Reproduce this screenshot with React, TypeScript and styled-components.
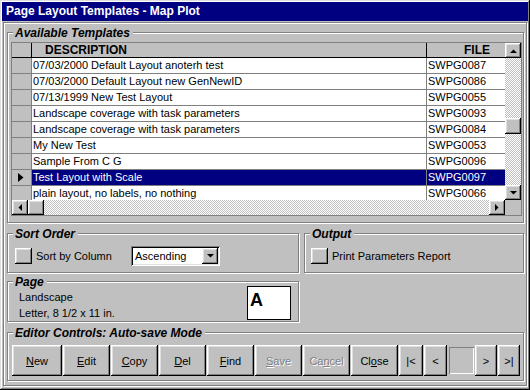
import React from "react";
import styled, { createGlobalStyle, css } from "styled-components";

const GlobalStyle = createGlobalStyle`
  html, body {
    margin: 0;
    padding: 0;
    background: #c0c0c0;
  }
  * {
    box-sizing: border-box;
  }
`;

const raised = css`
  background: #c0c0c0;
  box-shadow: inset -1px -1px #000, inset 1px 1px #fff,
    inset -2px -2px #808080, inset 2px 2px #dfdfdf;
`;

const etched = css`
  border: 1px solid #808080;
  box-shadow: inset 1px 1px #fff, 1px 1px #fff;
`;

const checker = css`
  background: repeating-conic-gradient(#fff 0 25%, #c0c0c0 0 50%) 0 0 / 2px
    2px;
`;

const Window = styled.div`
  width: 530px;
  height: 390px;
  padding: 2px;
  display: flex;
  flex-direction: column;
  background: #c0c0c0;
  box-shadow: inset -1px -1px #000, inset 1px 1px #dfdfdf,
    inset -2px -2px #808080, inset 2px 2px #fff;
  font-family: "Liberation Sans", Arial, sans-serif;
  font-size: 11px;
  color: #000;
`;

const TitleBar = styled.div`
  height: 19px;
  padding-left: 4px;
  background: #000080;
  color: #fff;
  font-weight: bold;
  font-size: 12px;
  line-height: 19px;
  white-space: nowrap;
`;

const Panel = styled.div`
  flex: 1;
  margin: 1px 1px 2px 1px;
  padding: 9px 2px 0 3px;
  display: flex;
  flex-direction: column;
  gap: 10px;
  ${etched};
`;

const Group = styled.div<{ $h: number }>`
  position: relative;
  height: ${(p) => p.$h}px;
  ${etched};
`;

const Legend = styled.span`
  position: absolute;
  top: -7px;
  left: 5px;
  padding: 0 3px 0 2px;
  background: #c0c0c0;
  font-weight: bold;
  font-style: italic;
  font-size: 12px;
  line-height: 14px;
  white-space: nowrap;
`;

/* ---------- templates grid ---------- */

const TemplatesBody = styled.div`
  height: 100%;
  padding: 9px 1px 6px 3px;
`;

const Grid = styled.div`
  height: 100%;
  border: 1px solid #808080;
  display: flex;
  background: #fff;
`;

const TableSide = styled.div`
  width: 493px;
  display: flex;
  flex-direction: column;
`;

const HeaderRow = styled.div`
  height: 15px;
  display: flex;
  background: #c0c0c0;
  border-bottom: 1px solid #000;
  font-weight: bold;
  font-size: 12px;
  line-height: 14px;
`;

const HeadCell = styled.div<{ $w?: number; $align?: string; $pad?: string }>`
  ${(p) => (p.$w ? `width: ${p.$w}px;` : "flex: 1;")}
  text-align: ${(p) => p.$align || "left"};
  padding: ${(p) => p.$pad || "0"};
  border-right: ${(p) => (p.$w ? "1px solid #000" : "none")};
`;

const Rows = styled.div`
  height: 142px;
  overflow: hidden;
`;

const Row = styled.div<{ $sel?: boolean }>`
  height: 16px;
  display: flex;
  border-bottom: 1px solid #808080;
  line-height: 15px;
  background: ${(p) => (p.$sel ? "#000080" : "#fff")};
  color: ${(p) => (p.$sel ? "#fff" : "#000")};
`;

const Selector = styled.div`
  width: 20px;
  background: #c0c0c0;
  border-right: 1px solid #808080;
  display: flex;
  align-items: center;
  padding-left: 6px;
`;

const Cell = styled.div<{ $w?: number }>`
  ${(p) => (p.$w ? `width: ${p.$w}px;` : "flex: 1;")}
  padding-left: 1px;
  white-space: nowrap;
  overflow: hidden;
  border-right: ${(p) => (p.$w ? "1px solid #808080" : "none")};
`;

const HScroll = styled.div`
  height: 15px;
  display: flex;
  ${checker};
`;

const VScroll = styled.div`
  width: 16px;
  display: flex;
  flex-direction: column;
`;

const Track = styled.div`
  flex: 1;
  ${checker};
`;

const Thumb = styled.div<{ $offset: number }>`
  width: 16px;
  height: 16px;
  margin-top: ${(p) => p.$offset}px;
  ${raised};
`;

const ScrollBtn = styled.div<{ $w: number; $h: number }>`
  width: ${(p) => p.$w}px;
  height: ${(p) => p.$h}px;
  flex-shrink: 0;
  display: flex;
  align-items: center;
  justify-content: center;
  ${raised};
`;

const Corner = styled.div`
  height: 15px;
  background: #c0c0c0;
`;

const Arrow = ({ dir }: { dir: "up" | "down" | "left" | "right" }) => {
  const pts = {
    up: "0,4 7,4 3.5,0.5",
    down: "0,0 7,0 3.5,3.5",
    left: "4,0 4,7 0.5,3.5",
    right: "0,0 0,7 3.5,3.5",
  }[dir];
  const vertical = dir === "up" || dir === "down";
  return (
    <svg width={vertical ? 7 : 4} height={vertical ? 4 : 7}>
      <polygon points={pts} fill="#000" />
    </svg>
  );
};

/* ---------- lower groups ---------- */

const Middle = styled.div`
  display: grid;
  grid-template-columns: 292px 1fr;
  column-gap: 5px;
  row-gap: 8px;
`;

const OptionRow = styled.div<{ $left: number }>`
  height: 100%;
  display: flex;
  align-items: flex-start;
  padding: 12px 0 0 ${(p) => p.$left}px;
`;

const OptionLine = styled.div`
  height: 20px;
  display: flex;
  align-items: center;
`;

const CheckBtn = styled.div`
  width: 17px;
  height: 16px;
  ${raised};
`;

const CheckText = styled.span<{ $w?: number }>`
  margin-left: 4px;
  ${(p) => (p.$w ? `width: ${p.$w}px;` : "")}
  white-space: nowrap;
`;

const Combo = styled.div`
  width: 89px;
  height: 20px;
  padding: 2px;
  display: flex;
  align-items: center;
  background: #fff;
  box-shadow: inset 1px 1px #808080, inset -1px -1px #fff, inset 2px 2px #000,
    inset -2px -2px #dfdfdf;
`;

const ComboText = styled.span`
  flex: 1;
  padding-left: 2px;
`;

const PageBody = styled.div`
  height: 100%;
  display: flex;
  padding: 0 7px 0 11px;
`;

const PageText = styled.div`
  flex: 1;
  padding-top: 7px;
  line-height: 16px;
`;

const Preview = styled.div`
  width: 44px;
  height: 34px;
  margin-top: 4px;
  border: 1px solid #000;
  background: #fff;
  padding: 3px 0 0 2px;
  font-weight: bold;
  font-size: 18px;
  line-height: 20px;
`;

const ButtonBar = styled.div`
  display: flex;
  gap: 1px;
  padding: 12px 0 0 4px;
`;

const Button = styled.div<{ $w: number; $disabled?: boolean }>`
  width: ${(p) => p.$w}px;
  height: 31px;
  display: flex;
  align-items: center;
  justify-content: center;
  ${raised};
  color: ${(p) => (p.$disabled ? "#808080" : "#000")};
  text-shadow: ${(p) => (p.$disabled ? "1px 1px #fff" : "none")};
  white-space: nowrap;
`;

const PosBox = styled.div`
  width: 25px;
  height: 27px;
  margin: 2px 0 0 1px;
  background: #c0c0c0;
  box-shadow: inset 1px 1px #808080, inset -1px -1px #fff;
`;

const templates: [string, string][] = [
  ["07/03/2000 Default Layout anoterh test", "SWPG0087"],
  ["07/03/2000 Default Layout new GenNewID", "SWPG0086"],
  ["07/13/1999 New Test Layout", "SWPG0055"],
  ["Landscape coverage with task parameters", "SWPG0093"],
  ["Landscape coverage with task parameters", "SWPG0084"],
  ["My New Test", "SWPG0053"],
  ["Sample From C G", "SWPG0096"],
  ["Test Layout with Scale", "SWPG0097"],
  ["plain layout, no labels, no nothing", "SWPG0066"],
];

const selected = 7;

const App: React.FC = () => {
  return (
    <>
      <GlobalStyle />
      <Window>
        <TitleBar>Page Layout Templates - Map Plot</TitleBar>
        <Panel>
          <Group $h={191}>
            <Legend>Available Templates</Legend>
            <TemplatesBody>
              <Grid>
                <TableSide>
                  <HeaderRow>
                    <HeadCell $w={20} />
                    <HeadCell $w={395} $pad="0 0 0 13px">
                      DESCRIPTION
                    </HeadCell>
                    <HeadCell $align="right" $pad="0 15px 0 0">
                      FILE
                    </HeadCell>
                  </HeaderRow>
                  <Rows>
                    {templates.map(([desc, file], i) => (
                      <Row key={file} $sel={i === selected}>
                        <Selector>
                          {i === selected && (
                            <svg width="6" height="9">
                              <polygon points="0,0 0,9 5.5,4.5" fill="#000" />
                            </svg>
                          )}
                        </Selector>
                        <Cell $w={395}>{desc}</Cell>
                        <Cell>{file}</Cell>
                      </Row>
                    ))}
                  </Rows>
                  <HScroll>
                    <ScrollBtn $w={16} $h={15}>
                      <Arrow dir="left" />
                    </ScrollBtn>
                    <ScrollBtn $w={16} $h={15} />
                    <div style={{ flex: 1 }} />
                    <ScrollBtn $w={16} $h={15}>
                      <Arrow dir="right" />
                    </ScrollBtn>
                  </HScroll>
                </TableSide>
                <VScroll>
                  <ScrollBtn $w={16} $h={15}>
                    <Arrow dir="up" />
                  </ScrollBtn>
                  <Track>
                    <Thumb $offset={60} />
                  </Track>
                  <ScrollBtn $w={16} $h={15}>
                    <Arrow dir="down" />
                  </ScrollBtn>
                  <Corner />
                </VScroll>
              </Grid>
            </TemplatesBody>
          </Group>

          <Middle>
            <Group $h={40}>
              <Legend>Sort Order</Legend>
              <OptionRow $left={7}>
                <OptionLine>
                  <CheckBtn />
                  <CheckText $w={95}>Sort by Column</CheckText>
                  <Combo>
                    <ComboText>Ascending</ComboText>
                    <ScrollBtn $w={16} $h={16}>
                      <Arrow dir="down" />
                    </ScrollBtn>
                  </Combo>
                </OptionLine>
              </OptionRow>
            </Group>
            <Group $h={40}>
              <Legend>Output</Legend>
              <OptionRow $left={6}>
                <OptionLine>
                  <CheckBtn />
                  <CheckText>Print Parameters Report</CheckText>
                </OptionLine>
              </OptionRow>
            </Group>
            <Group $h={41}>
              <Legend>Page</Legend>
              <PageBody>
                <PageText>
                  Landscape
                  <br />
                  Letter, 8 1/2 x 11 in.
                </PageText>
                <Preview>A</Preview>
              </PageBody>
            </Group>
          </Middle>

          <Group $h={49}>
            <Legend>Editor Controls: Auto-save Mode</Legend>
            <ButtonBar>
              <Button $w={50}>
                <u>N</u>ew
              </Button>
              <Button $w={47}>
                <u>E</u>dit
              </Button>
              <Button $w={47}>
                <u>C</u>opy
              </Button>
              <Button $w={47}>
                <u>D</u>el
              </Button>
              <Button $w={47}>
                <u>F</u>ind
              </Button>
              <Button $w={47} $disabled>
                <u>S</u>ave
              </Button>
              <Button $w={47} $disabled>
                Ca<u>n</u>cel
              </Button>
              <Button $w={47}>
                Cl<u>o</u>se
              </Button>
              <Button $w={24}>|&lt;</Button>
              <Button $w={23}>&lt;</Button>
              <PosBox />
              <Button $w={22}>&gt;</Button>
              <Button $w={22}>&gt;|</Button>
            </ButtonBar>
          </Group>
        </Panel>
      </Window>
    </>
  );
};

export default App;
